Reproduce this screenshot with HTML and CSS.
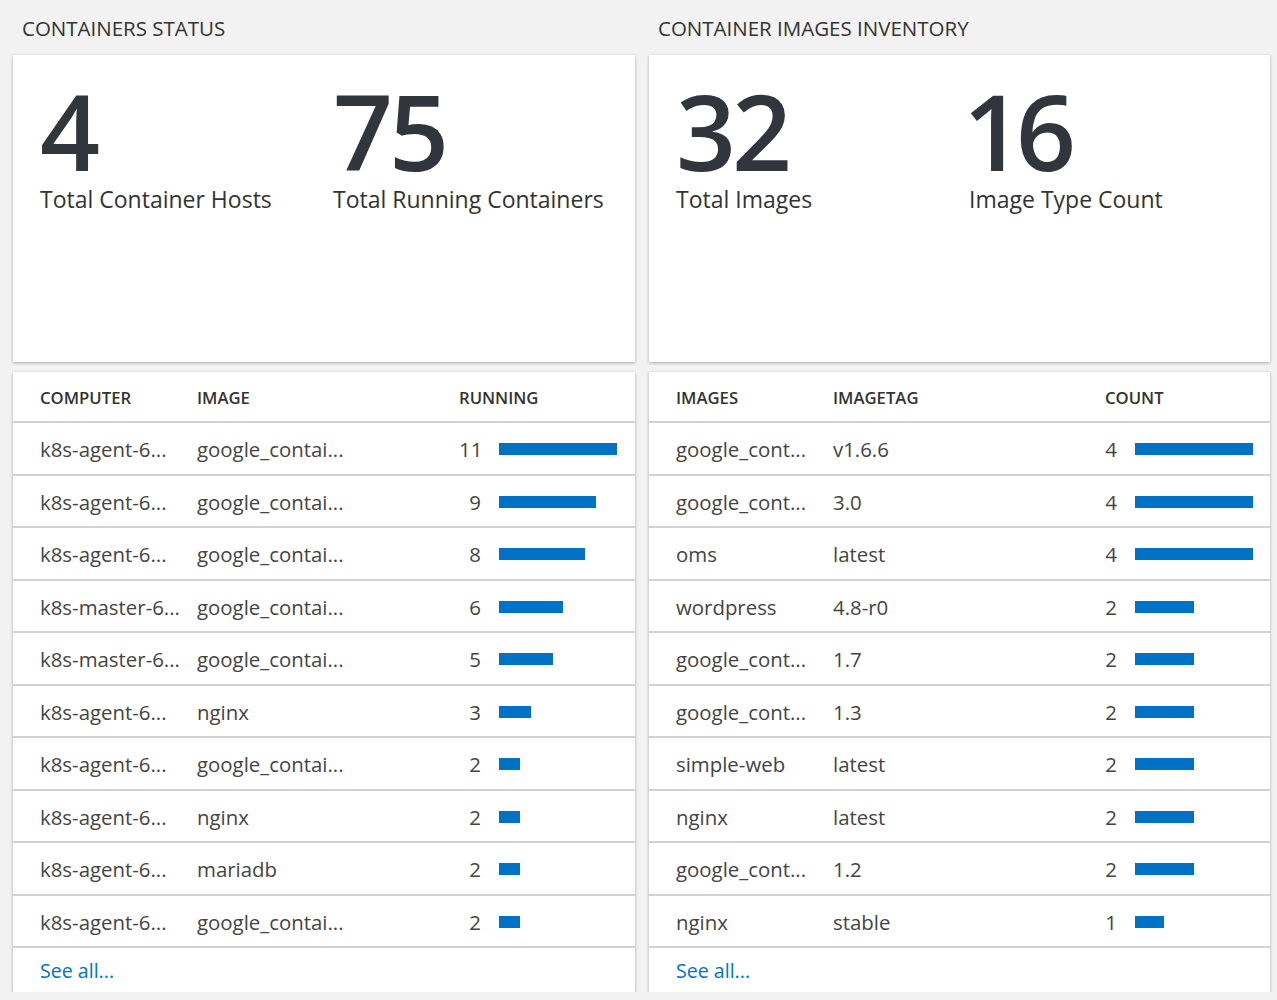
FILE: index.html
```html
<!DOCTYPE html>
<html>
<head>
<meta charset="utf-8">
<link rel="stylesheet" href="styles.css">
</head>
<body>
<div class="page">
  <section class="col col-left">
    <h2 class="title">CONTAINERS STATUS</h2>
    <div class="card stats">
      <div class="stat"><div class="num">4</div><div class="label">Total Container Hosts</div></div>
      <div class="stat"><div class="num">75</div><div class="label">Total Running Containers</div></div>
    </div>
    <div class="card table t-left">
      <div class="row head"><span>COMPUTER</span><span>IMAGE</span><span class="hspan">RUNNING</span></div>
      <div class="row"><span>k8s-agent-6...</span><span>google_contai...</span><span class="n">11</span><span class="barcell"><i class="bar" style="width:118px"></i></span></div>
      <div class="row"><span>k8s-agent-6...</span><span>google_contai...</span><span class="n">9</span><span class="barcell"><i class="bar" style="width:97px"></i></span></div>
      <div class="row"><span>k8s-agent-6...</span><span>google_contai...</span><span class="n">8</span><span class="barcell"><i class="bar" style="width:86px"></i></span></div>
      <div class="row"><span>k8s-master-6...</span><span>google_contai...</span><span class="n">6</span><span class="barcell"><i class="bar" style="width:64px"></i></span></div>
      <div class="row"><span>k8s-master-6...</span><span>google_contai...</span><span class="n">5</span><span class="barcell"><i class="bar" style="width:54px"></i></span></div>
      <div class="row"><span>k8s-agent-6...</span><span>nginx</span><span class="n">3</span><span class="barcell"><i class="bar" style="width:32px"></i></span></div>
      <div class="row"><span>k8s-agent-6...</span><span>google_contai...</span><span class="n">2</span><span class="barcell"><i class="bar" style="width:21px"></i></span></div>
      <div class="row"><span>k8s-agent-6...</span><span>nginx</span><span class="n">2</span><span class="barcell"><i class="bar" style="width:21px"></i></span></div>
      <div class="row"><span>k8s-agent-6...</span><span>mariadb</span><span class="n">2</span><span class="barcell"><i class="bar" style="width:21px"></i></span></div>
      <div class="row"><span>k8s-agent-6...</span><span>google_contai...</span><span class="n">2</span><span class="barcell"><i class="bar" style="width:21px"></i></span></div>
      <div class="foot"><a class="seeall">See all...</a></div>
    </div>
  </section>
  <section class="col col-right">
    <h2 class="title">CONTAINER IMAGES INVENTORY</h2>
    <div class="card stats">
      <div class="stat"><div class="num">32</div><div class="label">Total Images</div></div>
      <div class="stat"><div class="num num-one">16</div><div class="label">Image Type Count</div></div>
    </div>
    <div class="card table t-right">
      <div class="row head"><span>IMAGES</span><span>IMAGETAG</span><span class="hspan">COUNT</span></div>
      <div class="row"><span>google_cont...</span><span>v1.6.6</span><span class="n">4</span><span class="barcell"><i class="bar" style="width:118px"></i></span></div>
      <div class="row"><span>google_cont...</span><span>3.0</span><span class="n">4</span><span class="barcell"><i class="bar" style="width:118px"></i></span></div>
      <div class="row"><span>oms</span><span>latest</span><span class="n">4</span><span class="barcell"><i class="bar" style="width:118px"></i></span></div>
      <div class="row"><span>wordpress</span><span>4.8-r0</span><span class="n">2</span><span class="barcell"><i class="bar" style="width:59px"></i></span></div>
      <div class="row"><span>google_cont...</span><span>1.7</span><span class="n">2</span><span class="barcell"><i class="bar" style="width:59px"></i></span></div>
      <div class="row"><span>google_cont...</span><span>1.3</span><span class="n">2</span><span class="barcell"><i class="bar" style="width:59px"></i></span></div>
      <div class="row"><span>simple-web</span><span>latest</span><span class="n">2</span><span class="barcell"><i class="bar" style="width:59px"></i></span></div>
      <div class="row"><span>nginx</span><span>latest</span><span class="n">2</span><span class="barcell"><i class="bar" style="width:59px"></i></span></div>
      <div class="row"><span>google_cont...</span><span>1.2</span><span class="n">2</span><span class="barcell"><i class="bar" style="width:59px"></i></span></div>
      <div class="row"><span>nginx</span><span>stable</span><span class="n">1</span><span class="barcell"><i class="bar" style="width:29px"></i></span></div>
      <div class="foot"><a class="seeall">See all...</a></div>
    </div>
  </section>
</div>
</body>
</html>
```

FILE: styles.css
```css
html, body {
  margin: 0;
  padding: 0;
  background: #f2f2f2;
  font-family: "Open Sans", "Noto Sans", "Liberation Sans", sans-serif;
  color: #333;
}
.page {
  display: flex;
  gap: 14px;
  padding: 0 7px 0 13px;
}
.col-left { width: 622px; }
.col-right { width: 621px; }
.title {
  margin: 0;
  height: 55px;
  line-height: 57px;
  padding-left: 9px;
  font-size: 20.5px;
  font-weight: 400;
  color: #333;
}
.card {
  background: #fff;
  box-shadow: 0 1px 3px rgba(0,0,0,0.3);
}
.stats {
  height: 307px;
  box-sizing: border-box;
  padding: 34px 0 0 27px;
  display: grid;
  grid-template-columns: 293px 1fr;
  align-content: start;
}
.num {
  font-size: 105px;
  font-weight: 600;
  line-height: 84px;
  color: #31363d;
  letter-spacing: -4px;
}
.num-one {
  margin-left: -6px;
  letter-spacing: -7px;
}
.label {
  font-size: 23px;
  line-height: 30px;
  color: #333;
  margin-top: 11px;
}
.table {
  margin-top: 10px;
}
.row {
  display: grid;
  align-items: center;
  padding: 0 18px 0 27px;
  height: 50.5px;
  border-bottom: 2px solid #d2d2d2;
  font-size: 20.4px;
  color: #444;
}
.row > span { padding-top: 2px; }
.t-left .row { grid-template-columns: 157px 1fr 22px 136px; }
.t-right .row { grid-template-columns: 157px 1fr 12px 136px; padding-right: 17px; }
.row.head {
  height: 49px;
  font-size: 16.7px;
  font-weight: 600;
  color: #333;
}
.hspan { grid-column: 3 / 5; }
.n { text-align: right; }
.barcell {
  display: flex;
  padding-left: 18px;
}
.bar {
  display: block;
  height: 12px;
  background: #0072c6;
}
.foot {
  height: 44px;
  padding-left: 27px;
  display: flex;
  align-items: center;
}
.seeall {
  font-size: 19.6px;
  color: #0072c6;
}
```
